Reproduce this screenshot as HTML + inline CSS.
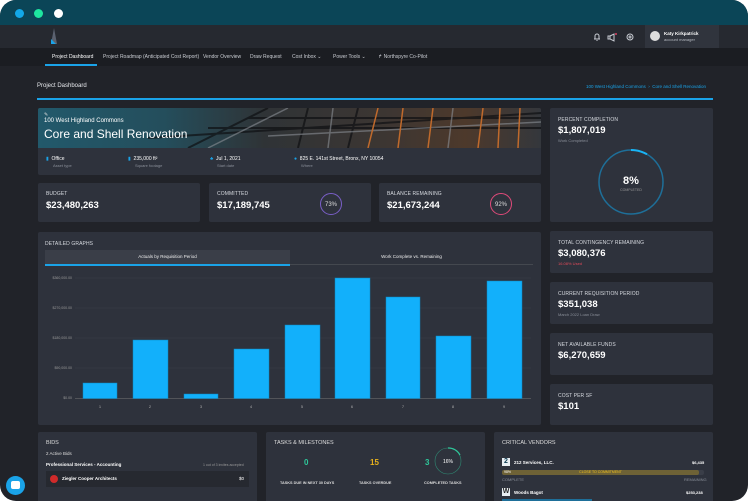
<!DOCTYPE html>
<html><head><meta charset="utf-8"><style>
*{box-sizing:border-box;margin:0;padding:0}
body{width:750px;height:501px;background:#fff;font-family:"Liberation Sans",sans-serif;color:#e8eaee;overflow:hidden;position:relative}
.frame{position:absolute;left:0;top:0;width:748px;height:501px;background:#212329;border-radius:16px;overflow:hidden}
.top{position:absolute;left:0;top:0;width:748px;height:25px;background:#0b4557}
.dot{position:absolute;top:9px;width:9px;height:9px;border-radius:50%}
.hdr{position:absolute;top:25px;left:0;width:748px;height:23px;background:#262930}
.nav{position:absolute;top:48px;left:0;width:748px;height:18px;background:#1b1d22;font-size:5px;color:#c9ccd2}
.nav span{position:absolute;top:6px}
.a{position:absolute}
.card{position:absolute;background:#2e323c;border-radius:2px}
.lbl{font-size:5px;color:#d7dae0;letter-spacing:.1px}
.big{font-size:9.5px;font-weight:bold;color:#fff}
.sub{font-size:4px;color:#8a8f99}
</style></head><body>
<div class="frame">
<div class="top"></div>
<div class="dot" style="left:15px;background:#13a8e8"></div>
<div class="dot" style="left:34px;background:#1ee6a0"></div>
<div class="dot" style="left:54px;background:#fff"></div>
<div class="hdr">
 <svg class="a" style="left:49px;top:3px" width="10" height="18"><path d="M5 0 L8 16 L2 16 Z" fill="#5b6270"/><path d="M2 11 L7 16 L2 16Z" fill="#1aa3e8"/></svg>
 <svg class="a" style="left:592px;top:7px" width="50" height="10" fill="none" stroke="#c8ccd3" stroke-width="1"><path d="M2 7h6M3 7V4a2 2 0 0 1 4 0v3M4.5 8.5h1"/><path d="M18 4l4-2v7l-4-2zM18 4h-2v3h2"/><circle cx="38" cy="5" r="3"/><circle cx="38" cy="5" r="1"/><circle cx="24" cy="2" r="1" fill="#e04060" stroke="none"/></svg>
 <div class="a" style="left:645px;top:0;width:74px;height:23px;background:#30343d"></div>
 <div class="a" style="left:650px;top:6px;width:10px;height:10px;border-radius:50%;background:#ddd"></div>
 <div class="a" style="left:664px;top:6px;font-size:4.5px;font-weight:bold;color:#fff">Katy Kirkpatrick</div>
 <div class="a" style="left:664px;top:12px;font-size:4px;color:#b5b9c0">account manager</div>
</div>
<div class="nav">
 <span style="left:52px;color:#fff">Project Dashboard</span>
 <span style="left:103px">Project Roadmap (Anticipated Cost Report)</span>
 <span style="left:203px">Vendor Overview</span>
 <span style="left:250px">Draw Request</span>
 <span style="left:292px">Cost Inbox ⌄</span>
 <span style="left:333px">Power Tools ⌄</span>
 <span style="left:378px">↱ Northspyre Co-Pilot</span>
 <div class="a" style="left:45px;top:16px;width:52px;height:2px;background:#1aa3e8"></div>
</div>
<div class="a" style="left:37px;top:83px;font-size:6px;color:#e8eaee">Project Dashboard</div>
<div class="a" style="left:586px;top:84px;font-size:4.5px;color:#1aa3e8">100 West Highland Commons &nbsp;›&nbsp; Core and Shell Renovation</div>
<div class="a" style="left:37px;top:98px;width:676px;height:2px;background:#1aa3e8"></div>

<div class="card" style="left:38px;top:108px;width:503px;height:67px;overflow:hidden">
 <div class="a" style="left:0;top:0;width:503px;height:40px;background:linear-gradient(90deg,#22596b 0%,#244e5c 25%,#2f3336 45%,#3d3632 70%,#4d392b 85%,#34373c 100%)"></div>
 <svg class="a" style="left:110px;top:0" width="393" height="40" fill="none"><g stroke="#0e1013" stroke-width="2" opacity=".7"><path d="M0 30 L393 5M40 40 L120 0M150 40 L160 0M200 40 L210 0M60 20L393 20M100 10L393 10"/></g><g stroke="#8a8f96" stroke-width="1.5" opacity=".6"><path d="M180 40L185 0M300 40L305 0M120 28L393 14M60 40L140 0"/></g><path d="M220 40L230 0M250 40L255 0M280 40L285 0M330 40L335 0M350 40L352 0M370 40L372 0" stroke="#c06a2c" stroke-width="1.5"/></svg>
 <div class="a" style="left:6px;top:4px;font-size:5px;color:#ddd">✎</div>
 <div class="a" style="left:6px;top:10px;font-size:6px;color:#fff">100 West Highland Commons</div>
 <div class="a" style="left:6px;top:19px;font-size:12px;color:#fff">Core and Shell Renovation</div>
 <div class="a" style="left:8px;top:48px;font-size:5px;color:#fff"><span style="color:#1aa3e8">▮</span> &nbsp;Office</div><div class="a sub" style="left:15px;top:55px">Asset type</div>
 <div class="a" style="left:90px;top:48px;font-size:5px;color:#fff"><span style="color:#1aa3e8">▮</span> &nbsp;235,000 ft²</div><div class="a sub" style="left:97px;top:55px">Square footage</div>
 <div class="a" style="left:172px;top:48px;font-size:5px;color:#fff"><span style="color:#1aa3e8">♣</span> &nbsp;Jul 1, 2021</div><div class="a sub" style="left:179px;top:55px">Start date</div>
 <div class="a" style="left:256px;top:48px;font-size:5px;color:#fff"><span style="color:#1aa3e8">●</span> &nbsp;825 E. 141st Street, Bronx, NY 10054</div><div class="a sub" style="left:263px;top:55px">Where</div>
</div>

<div class="card" style="left:38px;top:183px;width:162px;height:39px"><div class="a lbl" style="left:8px;top:8px">BUDGET</div><div class="a big" style="left:8px;top:17px">$23,480,263</div></div>
<div class="card" style="left:209px;top:183px;width:162px;height:39px"><div class="a lbl" style="left:8px;top:8px">COMMITTED</div><div class="a big" style="left:8px;top:17px">$17,189,745</div>
 <svg class="a" style="left:110px;top:9px" width="24" height="24"><circle cx="12" cy="12" r="10.5" fill="none" stroke="#7a5fc8" stroke-width="1"/><text x="12" y="14" font-size="6" fill="#ddd" text-anchor="middle" font-family="Liberation Sans">73%</text></svg></div>
<div class="card" style="left:379px;top:183px;width:162px;height:39px"><div class="a lbl" style="left:8px;top:8px">BALANCE REMAINING</div><div class="a big" style="left:8px;top:17px">$21,673,244</div>
 <svg class="a" style="left:110px;top:9px" width="24" height="24"><circle cx="12" cy="12" r="10.5" fill="none" stroke="#e04a7a" stroke-width="1"/><text x="12" y="14" font-size="6" fill="#ddd" text-anchor="middle" font-family="Liberation Sans">92%</text></svg></div>

<div class="card" style="left:550px;top:108px;width:163px;height:114px">
 <div class="a lbl" style="left:8px;top:9px">PERCENT COMPLETION</div><div class="a big" style="left:8px;top:17px">$1,807,019</div><div class="a sub" style="left:8px;top:30px">Work Completed</div>
 <svg class="a" style="left:47px;top:40px" width="70" height="70"><circle cx="34" cy="34" r="32" fill="none" stroke="#1e6f99" stroke-width="1.5"/><path d="M34 2 A32 32 0 0 1 50 6.3" fill="none" stroke="#19b4f5" stroke-width="2"/><text x="34" y="36" font-size="11" font-weight="bold" fill="#fff" text-anchor="middle" font-family="Liberation Sans">8%</text><text x="34" y="43" font-size="3.5" fill="#999" text-anchor="middle" font-family="Liberation Sans">COMPLETED</text></svg>
</div>
<div class="card" style="left:550px;top:231px;width:163px;height:42px"><div class="a lbl" style="left:8px;top:9px">TOTAL CONTINGENCY REMAINING</div><div class="a big" style="left:8px;top:17px">$3,080,376</div><div class="a" style="left:8px;top:30px;font-size:4px;color:#e04a5a">16.08% Used</div></div>
<div class="card" style="left:550px;top:282px;width:163px;height:42px"><div class="a lbl" style="left:8px;top:9px">CURRENT REQUISITION PERIOD</div><div class="a big" style="left:8px;top:17px">$351,038</div><div class="a sub" style="left:8px;top:30px">March 2022 Loan Draw</div></div>
<div class="card" style="left:550px;top:333px;width:163px;height:42px"><div class="a lbl" style="left:8px;top:9px">NET AVAILABLE FUNDS</div><div class="a big" style="left:8px;top:17px">$6,270,659</div></div>
<div class="card" style="left:550px;top:384px;width:163px;height:41px"><div class="a lbl" style="left:8px;top:9px">COST PER SF</div><div class="a big" style="left:8px;top:17px">$101</div></div>

<div class="card" style="left:38px;top:232px;width:503px;height:193px">
 <div class="a lbl" style="left:7px;top:9px">DETAILED GRAPHS</div>
 <div class="a" style="left:7px;top:18px;width:245px;height:14px;background:#3a3e48;font-size:4.5px;color:#eee;text-align:center;line-height:13px">Actuals by Requisition Period</div>
 <div class="a" style="left:252px;top:18px;width:243px;height:14px;font-size:4.5px;color:#eee;text-align:center;line-height:13px">Work Complete vs. Remaining</div>
 <div class="a" style="left:7px;top:32px;width:245px;height:1.5px;background:#1aa3e8"></div>
 <div class="a" style="left:252px;top:32px;width:243px;height:1px;background:#44484f"></div>
</div>
<svg class="a" style="left:0;top:0" width="748" height="501" font-family="Liberation Sans">
 <g stroke="#3a3e48" stroke-width=".5"><path d="M75 278H531M75 308H531M75 338H531M75 368H531"/></g>
 <path d="M75 398.5H531" stroke="#777" stroke-width=".6"/>
 <g font-size="3.5" fill="#999" text-anchor="end"><text x="72" y="279">$360,000.00</text><text x="72" y="309">$270,000.00</text><text x="72" y="339">$180,000.00</text><text x="72" y="369">$90,000.00</text><text x="72" y="399">$0.00</text></g>
 <g fill="#12b0fb" stroke="#0d85c0" stroke-width=".5">
 <rect x="83" y="383" width="34" height="15.5"/><rect x="133" y="340" width="35" height="58.5"/><rect x="184" y="394" width="34" height="4.5"/><rect x="234" y="349" width="35" height="49.5"/><rect x="285" y="325" width="35" height="73.5"/><rect x="335" y="278" width="35" height="120.5"/><rect x="386" y="297" width="34" height="101.5"/><rect x="436" y="336" width="35" height="62.5"/><rect x="487" y="281" width="35" height="117.5"/></g>
 <g font-size="4" fill="#aaa" text-anchor="middle"><text x="100" y="408">1</text><text x="150" y="408">2</text><text x="201" y="408">3</text><text x="251" y="408">4</text><text x="302" y="408">5</text><text x="352" y="408">6</text><text x="403" y="408">7</text><text x="453" y="408">8</text><text x="504" y="408">9</text></g>
</svg>

<div class="card" style="left:38px;top:432px;width:219px;height:80px">
 <div class="a" style="left:8px;top:8px;font-size:5.5px;color:#ddd">BIDS</div>
 <div class="a" style="left:8px;top:19px;font-size:4.5px;color:#ddd">2 Active Bids</div>
 <div class="a" style="left:8px;top:30px;font-size:4.5px;font-weight:bold;color:#fff">Professional Services - Accounting</div>
 <div class="a" style="left:165px;top:31px;font-size:3.5px;color:#999">1 out of 3 invites accepted</div>
 <div class="a" style="left:8px;top:39px;width:203px;height:16px;background:#262930"></div>
 <div class="a" style="left:12px;top:43px;width:8px;height:8px;border-radius:50%;background:#d02a2a"></div>
 <div class="a" style="left:24px;top:44px;font-size:4.5px;font-weight:bold;color:#fff">Ziegler Cooper Architects</div>
 <div class="a" style="left:201px;top:44px;font-size:4.5px;color:#fff">$0</div>
</div>
<div class="card" style="left:266px;top:432px;width:219px;height:80px">
 <div class="a" style="left:8px;top:8px;font-size:5.5px;color:#ddd">TASKS &amp; MILESTONES</div>
 <div class="a" style="left:38px;top:26px;font-size:8px;font-weight:bold;color:#2ec79a">0</div>
 <div class="a" style="left:104px;top:26px;font-size:8px;font-weight:bold;color:#e8b21c">15</div>
 <div class="a" style="left:159px;top:26px;font-size:8px;font-weight:bold;color:#2ec79a">3</div>
 <svg class="a" style="left:167px;top:14px" width="30" height="30"><circle cx="15" cy="15" r="13" fill="none" stroke="#2ec79a" stroke-width=".6" opacity=".6"/><path d="M15 2 A13 13 0 0 1 27 9" fill="none" stroke="#2ec79a" stroke-width="1.2"/><text x="15" y="17" font-size="5" fill="#fff" text-anchor="middle" font-family="Liberation Sans">16%</text></svg>
 <div class="a" style="left:14px;top:49px;font-size:3.8px;font-weight:bold;color:#ddd">TASKS DUE IN NEXT 30 DAYS</div>
 <div class="a" style="left:93px;top:49px;font-size:3.8px;font-weight:bold;color:#ddd">TASKS OVERDUE</div>
 <div class="a" style="left:158px;top:49px;font-size:3.8px;font-weight:bold;color:#ddd">COMPLETED TASKS</div>
</div>
<div class="card" style="left:494px;top:432px;width:219px;height:80px">
 <div class="a" style="left:8px;top:8px;font-size:5.5px;color:#ddd">CRITICAL VENDORS</div>
 <div class="a" style="left:8px;top:26px;width:8px;height:8px;background:#e8eef2;color:#0b3a50;font-size:7px;font-weight:bold;text-align:center;line-height:8px">2</div>
 <div class="a" style="left:20px;top:28px;font-size:4.5px;font-weight:bold;color:#fff">212 Services, LLC.</div>
 <div class="a" style="left:198px;top:28px;font-size:4px;font-weight:bold;color:#fff">$6,435</div>
 <div class="a" style="left:8px;top:38px;width:202px;height:5px;background:#3a3e48;border-radius:2px"></div>
 <div class="a" style="left:8px;top:38px;width:197px;height:5px;background:#6e6236;border-radius:2px;font-size:3.5px;color:#f0c020;text-align:center;line-height:5px">CLOSE TO COMMITMENT</div>
 <div class="a" style="left:10px;top:38px;font-size:3.5px;color:#fff;line-height:5px">98%</div>
 <div class="a sub" style="left:8px;top:45px">COMPLETE</div><div class="a sub" style="left:190px;top:45px">REMAINING</div>
 <div class="a" style="left:8px;top:56px;width:8px;height:8px;background:#e8eef2;color:#222;font-size:7px;font-weight:bold;text-align:center;line-height:8px">W</div>
 <div class="a" style="left:20px;top:58px;font-size:4.5px;font-weight:bold;color:#fff">Woods Bagot</div>
 <div class="a" style="left:192px;top:58px;font-size:4px;font-weight:bold;color:#fff">$253,238</div>
 <div class="a" style="left:8px;top:67px;width:90px;height:5px;background:#1e6f99"></div>
</div>
<div class="a" style="left:6px;top:476px;width:19px;height:19px;border-radius:50%;background:#1aa3e8"></div>
<div class="a" style="left:11px;top:481px;width:9px;height:8px;border-radius:2px;background:#fff"></div>
</div>
</body></html>
